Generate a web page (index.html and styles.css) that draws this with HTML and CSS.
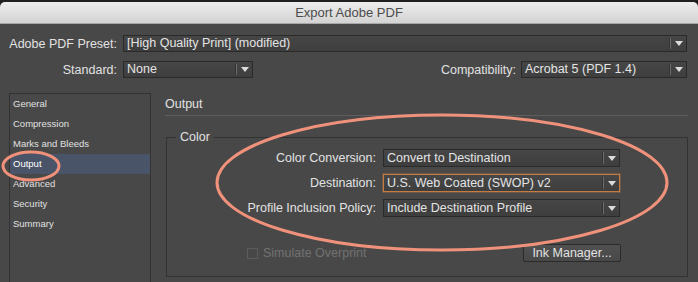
FILE: index.html
```html
<!DOCTYPE html>
<html lang="en">
<head>
    <meta charset="utf-8">
    <meta name="viewport" content="width=device-width, initial-scale=1">
    <title>Export Adobe PDF</title>
    <link rel="stylesheet" href="styles.css">
</head>
<body>
<div class="window">
    <div class="titlebar">Export Adobe PDF</div>
    <div class="dialog">
        <div class="presets">
            <div class="preset-row">
                <label class="field-label">Adobe PDF Preset:</label>
                <div class="select select-wide"><span class="value">[High Quality Print] (modified)</span><span class="caret"></span></div>
            </div>
            <div class="preset-row second">
                <label class="field-label">Standard:</label>
                <div class="select select-standard"><span class="value">None</span><span class="caret"></span></div>
                <label class="compat-label">Compatibility:</label>
                <div class="select select-compat"><span class="value">Acrobat 5 (PDF 1.4)</span><span class="caret"></span></div>
            </div>
        </div>
        <div class="main">
            <ul class="sections">
                <li>General</li>
                <li>Compression</li>
                <li>Marks and Bleeds</li>
                <li class="active">Output</li>
                <li>Advanced</li>
                <li>Security</li>
                <li>Summary</li>
            </ul>
            <div class="panel">
                <h2 class="panel-title">Output</h2>
                <fieldset class="group">
                    <legend>Color</legend>
                    <div class="color-grid">
                        <label class="grid-label">Color Conversion:</label>
                        <div class="select"><span class="value">Convert to Destination</span><span class="caret"></span></div>
                        <label class="grid-label">Destination:</label>
                        <div class="select focused"><span class="value">U.S. Web Coated (SWOP) v2</span><span class="caret"></span></div>
                        <label class="grid-label">Profile Inclusion Policy:</label>
                        <div class="select"><span class="value">Include Destination Profile</span><span class="caret"></span></div>
                    </div>
                    <div class="group-footer">
                        <label class="checkbox disabled"><span class="box"></span>Simulate Overprint</label>
                        <button class="btn">Ink Manager...</button>
                    </div>
                </fieldset>
            </div>
        </div>
    </div>
</div>

<svg class="annotations" width="698" height="282" viewBox="0 0 698 282">
    <ellipse cx="442" cy="182.5" rx="225" ry="67.5" fill="none" stroke="#f0927b" stroke-width="3"/>
    <ellipse cx="31" cy="166" rx="28" ry="14" fill="none" stroke="#f0927b" stroke-width="3"/>
</svg>
</body>
</html>
```

FILE: styles.css
```css
body {
    margin: 0;
    width: 698px;
    height: 282px;
    overflow: hidden;
    background-color: #1f1f1f;
    font-family: "Liberation Sans", Arial, sans-serif;
    font-size: 12.5px;
    color: #e2e2e2;
}
.window {
    display: flex;
    flex-direction: column;
    height: 282px;
}
.titlebar {
    margin-top: 2px;
    height: 22px;
    box-sizing: border-box;
    border-radius: 5px 5px 0 0;
    border-bottom: 1px solid #a8a8a8;
    background: linear-gradient(#ededed, #d3d3d3);
    color: #4c4c4c;
    font-size: 13px;
    line-height: 21px;
    text-align: center;
}
.dialog {
    flex: 1;
    display: flex;
    flex-direction: column;
    background-color: #484848;
}
.presets {
    padding: 11px 11px 0 9px;
}
.preset-row {
    display: flex;
    align-items: center;
    height: 17px;
}
.preset-row.second {
    margin-top: 9px;
}
.field-label {
    width: 108px;
    margin-right: 6px;
    text-align: right;
}
.compat-label {
    margin-left: auto;
    margin-right: 5px;
}
.select {
    display: flex;
    align-items: stretch;
    height: 17px;
    box-sizing: border-box;
    border: 1px solid #2a2a2a;
    background: linear-gradient(#464646, #3e3e3e);
    color: #e4e4e4;
    line-height: 15px;
}
.select .value {
    flex: 1;
    padding-left: 3px;
    white-space: nowrap;
    overflow: hidden;
}
.caret {
    width: 15px;
    margin: 2px 0;
    border-left: 1px solid #6c6c6c;
    box-shadow: -1px 0 0 #333;
    display: flex;
    align-items: center;
    justify-content: center;
}
.caret::after {
    content: "";
    border-left: 4px solid transparent;
    border-right: 4px solid transparent;
    border-top: 5px solid #dcdcdc;
}
.select-wide {
    flex: 1;
}
.select-standard {
    width: 130px;
}
.select-compat {
    width: 166px;
}
.main {
    flex: 1;
    display: flex;
    margin-top: 15px;
    padding-left: 9px;
}
.sections {
    width: 142px;
    box-sizing: border-box;
    margin: 0;
    padding: 0;
    list-style: none;
    border: 1px solid #333;
    border-bottom: none;
    font-size: 9.5px;
}
.sections li {
    height: 20px;
    line-height: 20px;
    padding-left: 3px;
    color: #e0e0e0;
}
.sections li.active {
    background-color: #4a5468;
    color: #ffffff;
}
.panel {
    flex: 1;
    padding: 0 10px 0 14px;
}
.panel-title {
    margin: 0;
    padding-top: 1px;
    font-size: 12.5px;
    font-weight: normal;
    line-height: 21px;
    border-bottom: 1px solid #5e5e5e;
}
.group {
    margin: 13px 0 0 1px;
    padding: 4px 0 14px 0;
    min-width: 0;
    border: 1px solid #323232;
}
.group legend {
    margin-left: 9px;
    padding: 0 4px;
    line-height: 16px;
    font-size: 12.5px;
}
.color-grid {
    display: grid;
    grid-template-columns: 209px 237px;
    grid-auto-rows: 18px;
    column-gap: 7px;
    row-gap: 7px;
}
.color-grid .select {
    height: 18px;
    line-height: 16px;
}
.grid-label {
    text-align: right;
    line-height: 18px;
}
.select.focused {
    border-color: #c47c42;
    box-shadow: 0 0 0 1px rgba(196, 124, 66, 0.3);
}
.group-footer {
    display: flex;
    align-items: center;
    justify-content: space-between;
    margin: 27px 0 0 80px;
    width: 374px;
}
.checkbox {
    display: flex;
    align-items: center;
}
.checkbox .box {
    width: 11px;
    height: 11px;
    box-sizing: border-box;
    border: 1px solid #5c5c5c;
    margin-right: 5px;
}
.checkbox.disabled {
    color: #727272;
}
.btn {
    height: 18px;
    width: 98px;
    padding: 0;
    border: 1px solid #2b2b2b;
    border-radius: 2px;
    background: linear-gradient(#515151, #484848);
    color: #e2e2e2;
    font-family: "Liberation Sans", Arial, sans-serif;
    font-size: 12.5px;
    line-height: 16px;
}
.annotations {
    position: absolute;
    top: 0;
    left: 0;
    pointer-events: none;
}
```
